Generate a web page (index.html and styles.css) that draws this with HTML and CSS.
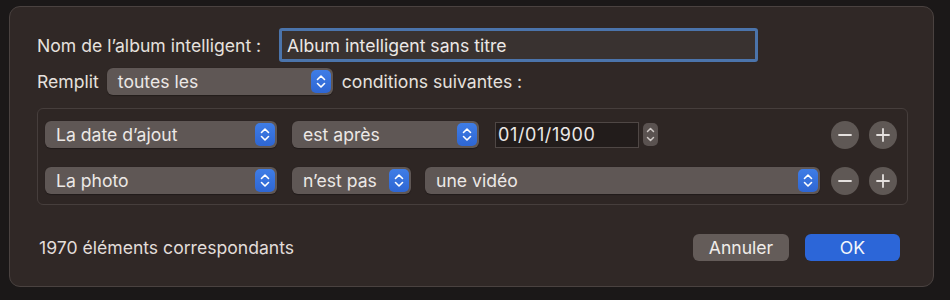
FILE: index.html
```html
<!DOCTYPE html>
<html lang="fr">
<head>
<meta charset="utf-8">
<link rel="stylesheet" href="styles.css">
</head>
<body>
<div class="dialog">
  <div class="row name-row">
    <span class="label name-label">Nom de l’album intelligent :</span>
    <div class="textfield">Album intelligent sans titre</div>
  </div>
  <div class="row match-row">
    <span class="label">Remplit</span>
    <div class="popup w-all"><span>toutes les</span><span class="arrows"><svg viewBox="0 0 20 23" width="20" height="23"><path d="M6.5 9.5 L10 6 L13.5 9.5 M6.5 13.5 L10 17 L13.5 13.5" fill="none" stroke="#fff" stroke-width="1.6" stroke-linecap="round" stroke-linejoin="round"/></svg></span></div>
    <span class="label">conditions suivantes :</span>
  </div>
  <div class="conditions">
    <div class="cond">
      <div class="popup w-field"><span>La date d’ajout</span><span class="arrows"><svg viewBox="0 0 20 23" width="20" height="23"><path d="M6.5 9.5 L10 6 L13.5 9.5 M6.5 13.5 L10 17 L13.5 13.5" fill="none" stroke="#fff" stroke-width="1.6" stroke-linecap="round" stroke-linejoin="round"/></svg></span></div>
      <div class="popup w-op1"><span>est après</span><span class="arrows"><svg viewBox="0 0 20 23" width="20" height="23"><path d="M6.5 9.5 L10 6 L13.5 9.5 M6.5 13.5 L10 17 L13.5 13.5" fill="none" stroke="#fff" stroke-width="1.6" stroke-linecap="round" stroke-linejoin="round"/></svg></span></div>
      <div class="datefield">01/01/1900</div>
      <div class="stepper"><svg viewBox="0 0 15 23" width="15" height="23"><path d="M4.5 8.5 L7.5 5.5 L10.5 8.5 M4.5 14.5 L7.5 17.5 L10.5 14.5" fill="none" stroke="#cfc9c6" stroke-width="1.5" stroke-linecap="round" stroke-linejoin="round"/></svg></div>
      <div class="spacer"></div>
      <div class="circle"><svg viewBox="0 0 28 28" width="28" height="28"><path d="M8 14 H20" stroke="#e4e0de" stroke-width="1.8" stroke-linecap="round"/></svg></div>
      <div class="circle"><svg viewBox="0 0 28 28" width="28" height="28"><path d="M8 14 H20 M14 8 V20" stroke="#e4e0de" stroke-width="1.8" stroke-linecap="round"/></svg></div>
    </div>
    <div class="cond">
      <div class="popup w-field"><span>La photo</span><span class="arrows"><svg viewBox="0 0 20 23" width="20" height="23"><path d="M6.5 9.5 L10 6 L13.5 9.5 M6.5 13.5 L10 17 L13.5 13.5" fill="none" stroke="#fff" stroke-width="1.6" stroke-linecap="round" stroke-linejoin="round"/></svg></span></div>
      <div class="popup w-op2"><span>n’est pas</span><span class="arrows"><svg viewBox="0 0 20 23" width="20" height="23"><path d="M6.5 9.5 L10 6 L13.5 9.5 M6.5 13.5 L10 17 L13.5 13.5" fill="none" stroke="#fff" stroke-width="1.6" stroke-linecap="round" stroke-linejoin="round"/></svg></span></div>
      <div class="popup w-val"><span>une vidéo</span><span class="arrows"><svg viewBox="0 0 20 23" width="20" height="23"><path d="M6.5 9.5 L10 6 L13.5 9.5 M6.5 13.5 L10 17 L13.5 13.5" fill="none" stroke="#fff" stroke-width="1.6" stroke-linecap="round" stroke-linejoin="round"/></svg></span></div>
      <div class="spacer"></div>
      <div class="circle"><svg viewBox="0 0 28 28" width="28" height="28"><path d="M8 14 H20" stroke="#e4e0de" stroke-width="1.8" stroke-linecap="round"/></svg></div>
      <div class="circle"><svg viewBox="0 0 28 28" width="28" height="28"><path d="M8 14 H20 M14 8 V20" stroke="#e4e0de" stroke-width="1.8" stroke-linecap="round"/></svg></div>
    </div>
  </div>
  <div class="footer">
    <span class="count">1970 éléments correspondants</span>
    <div class="spacer"></div>
    <button class="btn cancel">Annuler</button>
    <button class="btn ok">OK</button>
  </div>
</div>
</body>
</html>
```
FILE: styles.css
```css
html, body {
  margin: 0;
  padding: 0;
  background: #1b1818;
  width: 950px;
  height: 300px;
  overflow: hidden;
  font-family: "Inter", "Liberation Sans", sans-serif;
  color: #e6e1de;
}
.dialog {
  margin: 6px 0 0 9px;
  width: 925px;
  height: 281px;
  box-sizing: border-box;
  padding: 21px 27px 0 27px;
  background: #302826;
  border: 1px solid #4a4240;
  border-radius: 11px;
  display: flex;
  flex-direction: column;
}
.row {
  display: flex;
  align-items: center;
}
.label {
  font-size: 17.6px;
  white-space: nowrap;
}
.name-row { height: 34px; }
.name-label { width: 242px; flex: none; }
.textfield {
  width: 479px;
  height: 34px;
  box-sizing: border-box;
  border: 3px solid #4b74ab;
  border-radius: 3px;
  background: #393230;
  font-size: 17.6px;
  padding: 0 0 0 5px;
  display: flex;
  align-items: center;
  color: #ece8e6;
}
.match-row {
  margin-top: 6px;
  height: 27px;
  gap: 8px;
}
.match-row .w-all { width: 226px; margin-right: 1px; }
.popup {
  height: 27px;
  box-sizing: border-box;
  background: #5f5755;
  border-radius: 6px;
  display: flex;
  align-items: center;
  justify-content: space-between;
  padding: 0 2px 0 11px;
  font-size: 17.6px;
  color: #ece8e6;
  flex: none;
  box-shadow: 0 0.5px 1px rgba(0,0,0,0.3);
}
.arrows {
  width: 20px;
  height: 23px;
  border-radius: 5px;
  background: linear-gradient(#3f7de6, #2e66d3);
  display: flex;
}
.conditions {
  margin-top: 13px;
  width: 871px;
  height: 97px;
  box-sizing: border-box;
  border: 1px solid #463e3c;
  border-radius: 6px;
  background: #2e2624;
  padding: 12px 10px 0 7px;
  display: flex;
  flex-direction: column;
  gap: 19px;
}
.cond {
  display: flex;
  align-items: center;
  height: 27px;
}
.w-field { width: 232px; margin-right: 15px; }
.w-op1 { width: 187px; margin-right: 16px; }
.w-op2 { width: 119px; margin-right: 14px; }
.w-val { width: 395px; }
.datefield {
  width: 144px;
  height: 26px;
  box-sizing: border-box;
  background: #221c1b;
  border: 1px solid #4f4745;
  font-size: 18px;
  letter-spacing: 0.6px;
  display: flex;
  align-items: center;
  padding-left: 2px;
  color: #ece8e6;
  margin-right: 4px;
}
.stepper {
  width: 15px;
  height: 23px;
  background: #5a5250;
  border-radius: 5px;
  display: flex;
}
.spacer { flex: 1; }
.circle {
  width: 28px;
  height: 28px;
  border-radius: 50%;
  background: #5f5855;
  display: flex;
  margin-left: 10px;
}
.footer {
  margin-top: 29px;
  display: flex;
  align-items: center;
  height: 27px;
  padding-left: 2px;
  padding-right: 6px;
}
.count { font-size: 17.6px; color: #e2ddda; }
.btn {
  height: 27px;
  border: none;
  border-radius: 6px;
  font-family: inherit;
  font-size: 17.6px;
  color: #f0ecea;
  padding: 0;
}
.cancel { width: 96px; background: #645c59; margin-right: 16px; }
.ok { width: 95px; background: #2c66d8; color: #f4f6fb; }
```
